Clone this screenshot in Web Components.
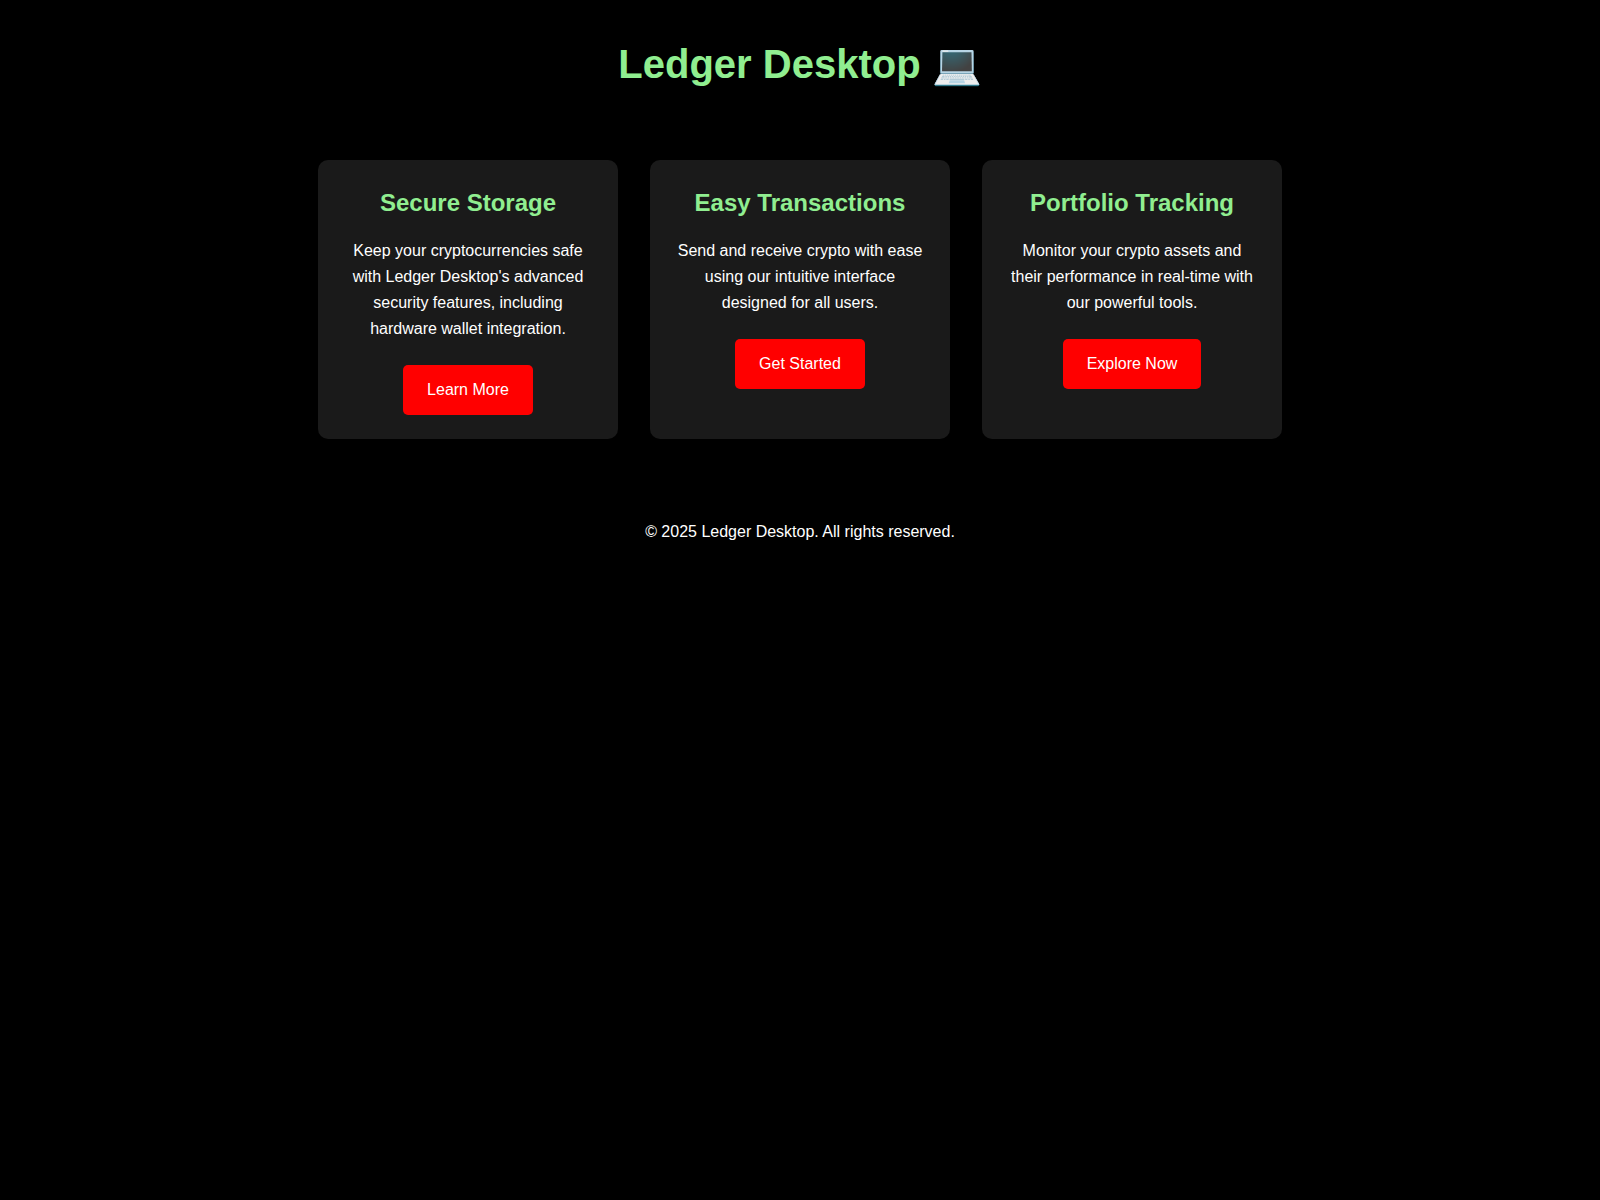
<!DOCTYPE html>
<html lang="en">
<head>
<meta charset="utf-8">
<meta name="viewport" content="width=device-width, initial-scale=1">
<title>Ledger Desktop</title>
<style>
  body {
    margin: 0;
    background: #000;
    color: #fff;
    font-family: "Liberation Sans", Arial, sans-serif;
    font-size: 16px;
    line-height: 26px;
  }
</style>
</head>
<body>
<ledger-page>
  <ledger-header slot="header">Ledger Desktop 💻</ledger-header>
  <feature-card heading="Secure Storage" action="Learn More" href="#learn">Keep your cryptocurrencies safe with Ledger Desktop's advanced security features, including hardware wallet integration.</feature-card>
  <feature-card heading="Easy Transactions" action="Get Started" href="#start">Send and receive crypto with ease using our intuitive interface designed for all users.</feature-card>
  <feature-card heading="Portfolio Tracking" action="Explore Now" href="#explore">Monitor your crypto assets and their performance in real-time with our powerful tools.</feature-card>
  <ledger-footer slot="footer">© 2025 Ledger Desktop. All rights reserved.</ledger-footer>
</ledger-page>
<script>
  class LedgerPage extends HTMLElement {
    constructor() {
      super();
      this.attachShadow({ mode: "open" }).innerHTML = `
        <style>
          :host { display: block; }
          main {
            display: flex;
            flex-wrap: wrap;
            justify-content: center;
            gap: 32px;
            padding: 32px;
          }
        </style>
        <slot name="header"></slot>
        <main><slot></slot></main>
        <slot name="footer"></slot>`;
    }
  }

  class LedgerHeader extends HTMLElement {
    constructor() {
      super();
      this.attachShadow({ mode: "open" }).innerHTML = `
        <style>
          :host { display: block; padding: 32px; text-align: center; }
          h1 { margin: 0; color: #90ee90; font-size: 40px; line-height: 64px; }
        </style>
        <header><h1><slot></slot></h1></header>`;
    }
  }

  class FeatureCard extends HTMLElement {
    constructor() {
      super();
      this.attachShadow({ mode: "open" }).innerHTML = `
        <style>
          :host {
            display: block;
            box-sizing: border-box;
            width: 300px;
            padding: 24px;
            border-radius: 10px;
            background: #1a1a1a;
            text-align: center;
          }
          h2 { margin: 0 0 16px; color: #90ee90; font-size: 24px; line-height: 38px; }
          p { margin: 0 0 23px; }
          a {
            display: inline-block;
            padding: 12px 24px;
            border-radius: 5px;
            background: #f00;
            color: #fff;
            text-decoration: none;
            vertical-align: top;
          }
          a:hover { background: #c00; }
        </style>
        <article>
          <h2></h2>
          <p><slot></slot></p>
          <a></a>
        </article>`;
    }
    connectedCallback() {
      this.shadowRoot.querySelector("h2").textContent = this.getAttribute("heading");
      const link = this.shadowRoot.querySelector("a");
      link.textContent = this.getAttribute("action");
      link.href = this.getAttribute("href");
    }
  }

  class LedgerFooter extends HTMLElement {
    constructor() {
      super();
      this.attachShadow({ mode: "open" }).innerHTML = `
        <style>
          :host { display: block; margin-top: 16px; padding: 32px; text-align: center; }
          p { margin: 0; }
        </style>
        <footer><p><slot></slot></p></footer>`;
    }
  }

  customElements.define("ledger-page", LedgerPage);
  customElements.define("ledger-header", LedgerHeader);
  customElements.define("feature-card", FeatureCard);
  customElements.define("ledger-footer", LedgerFooter);
</script>
</body>
</html>
